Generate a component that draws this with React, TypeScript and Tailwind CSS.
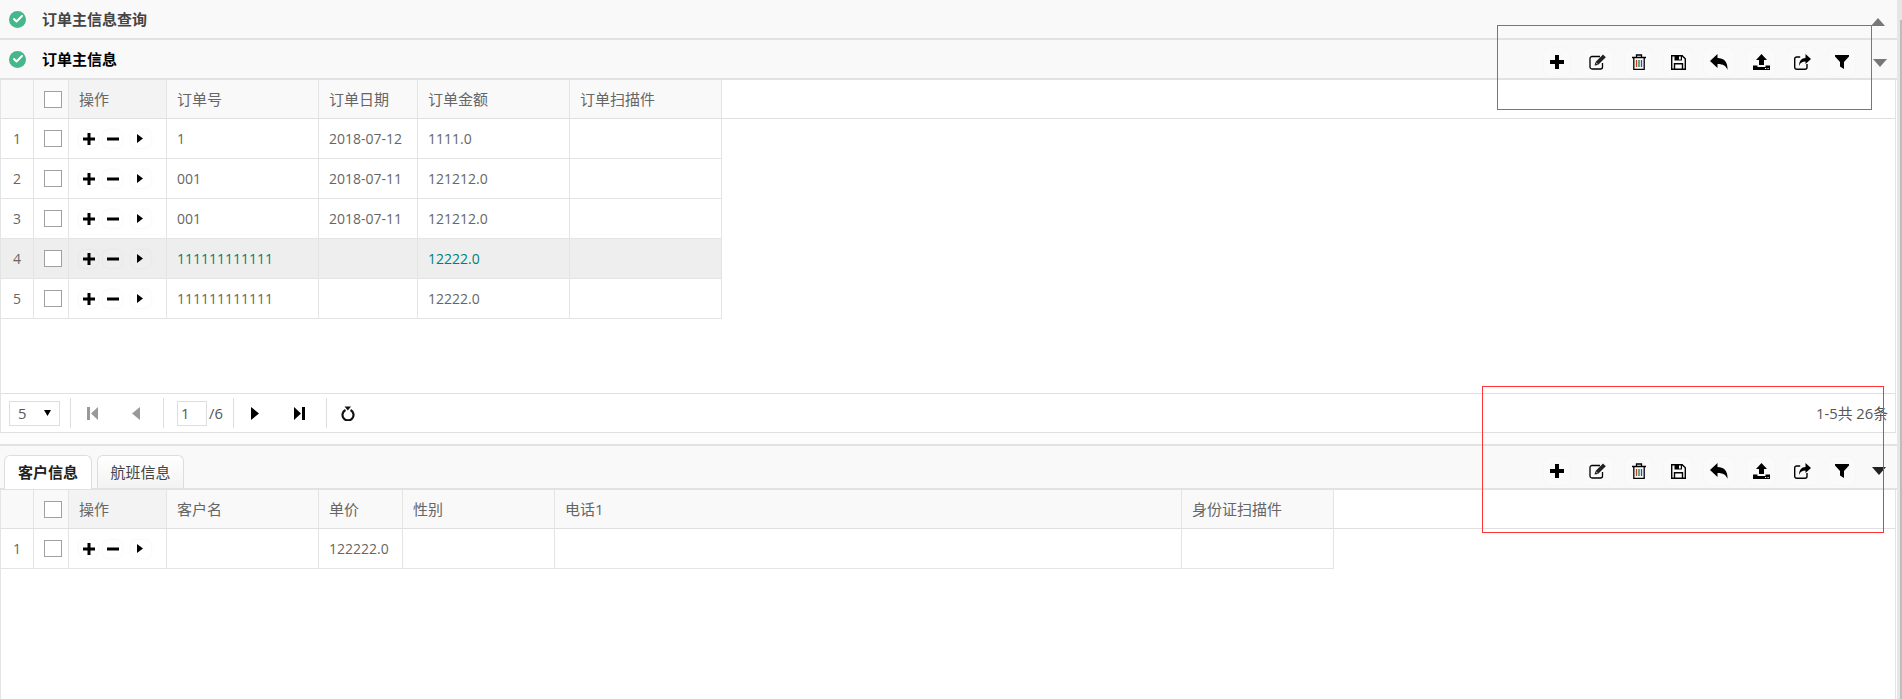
import { Check } from "lucide-react";

const font = "font-['Open_Sans','Noto_Sans_CJK_SC',sans-serif]";

const orderCols = [33, 35, 98, 152, 99, 152, 152];
const customerCols = [33, 35, 98, 152, 84, 152, 627, 152];

const orderRows = [
  ["1", "2018-07-12", "1111.0"],
  ["001", "2018-07-11", "121212.0"],
  ["001", "2018-07-11", "121212.0"],
  ["111111111111", "", "12222.0"],
  ["111111111111", "", "12222.0"],
];

const ToolButton = ({ width, className, children }: { width: number; className?: string; children: React.ReactNode }) => (
  <div
    className={`flex h-7 items-center justify-center rounded-md bg-[#fafafa] shadow-[0_0_2px_rgba(0,0,0,0.04)] ${className ?? ""}`}
    style={{ width }}
  >
    {children}
  </div>
);

const Toolbar = ({ dark }: { dark?: boolean }) => (
  <div className="flex items-center gap-3">
    <ToolButton width={26}>
      <svg width="14" height="14" viewBox="0 0 14 14"><path d="M5 0h4v5h5v4H9v5H5V9H0V5h5z" fill="#000" /></svg>
    </ToolButton>
    <ToolButton width={30} className="ml-px">
      <svg width="18" height="16" viewBox="0 0 18 16" fill="none">
        <path d="M13.500 9v4a2 2 0 0 1-2 2H3a2 2 0 0 1-2-2V4.500a2 2 0 0 1 2-2h8" stroke="#000" strokeWidth="1.300" />
        <path d="M5.500 11.500l1-3.500L14 .5l2.800 2.800L9 11z" fill="#222" />
        <path d="M6.800 8.500l2 2" stroke="#fff" strokeWidth="0.800" />
      </svg>
    </ToolButton>
    <ToolButton width={27}>
      <svg width="14" height="16" viewBox="0 0 14 16" fill="none">
        <path d="M0 3.500h14M4.500 3V1h5v2M1.800 3.500v11.800h10.400V3.500" stroke="#000" strokeWidth="1.300" />
        <path d="M4.500 6v7" stroke="#c2410c" strokeWidth="1.300" />
        <path d="M7 6v7" stroke="#15803d" strokeWidth="1.300" />
        <path d="M9.500 6v7" stroke="#1d4ed8" strokeWidth="1.300" />
      </svg>
    </ToolButton>
    <ToolButton width={28}>
      <svg width="15" height="15" viewBox="0 0 15 15" fill="none">
        <path d="M.7.7h10.500l3.100 3.100v10.500H.7z" stroke="#000" strokeWidth="1.400" />
        <path d="M3.500 1h7.500v4.500H3.500z" fill="#000" />
        <path d="M8 1.500h1.800v3H8z" fill="#fff" />
        <path d="M3.500 14.500V8.700h8v5.800" stroke="#000" strokeWidth="1.400" />
      </svg>
    </ToolButton>
    <ToolButton width={30}>
      <svg width="18" height="16" viewBox="0 0 18 16"><path d="M7.500 0v4C13.500 4 18 7.500 17.500 16c-1.500-4-4-6-10-6v4L0 7z" fill="#000" /></svg>
    </ToolButton>
    <ToolButton width={28} className="ml-px">
      <svg width="17" height="16" viewBox="0 0 17 16">
        <path d="M8.500 0L14 6h-3v5H6V6H3z" fill="#000" />
        <path d="M0 11.500h4.500v1.500h8v-1.500H17V16H0z" fill="#000" />
        <path d="M12 14h1.200v1H12zM14.500 14h1.200v1h-1.200z" fill="#fff" />
      </svg>
    </ToolButton>
    <ToolButton width={29} className="ml-px">
      <svg width="17" height="16" viewBox="0 0 17 16" fill="none">
        <path d="M13 10v3.300a2 2 0 0 1-2 2H2.700a2 2 0 0 1-2-2V5a2 2 0 0 1 2-2h3.500" stroke="#000" strokeWidth="1.400" />
        <path d="M11.500 0L17 5l-5.500 5V7.500C8.500 7.500 6.300 8.500 5 12c0-5 2.500-8 6.500-8z" fill="#000" />
      </svg>
    </ToolButton>
    <ToolButton width={26}>
      <svg width="14" height="14" viewBox="0 0 14 14"><path d="M0 0h14v1.500L9 7v7L5 11.500V7L0 1.500z" fill="#000" /></svg>
    </ToolButton>
    <div
      className={`h-0 w-0 border-x-[7px] border-t-[8px] border-x-transparent ${dark ? "ml-[5px] border-t-[#222]" : "ml-[6px] translate-y-px border-t-[#777]"}`}
    />
  </div>
);

const actionBox = "flex h-[18px] items-center justify-center rounded-md shadow-[0_0_3px_rgba(0,0,0,0.06)]";

const RowActions = () => (
  <div className="flex items-center gap-[5px]">
    <div className={`w-[19px] ${actionBox}`}>
      <svg width="12" height="12" viewBox="0 0 12 12"><path d="M4.500 0h3v4.500H12v3H7.500V12h-3V7.500H0v-3h4.500z" fill="#000" /></svg>
    </div>
    <div className={`w-[19px] ${actionBox}`}>
      <svg width="12" height="12" viewBox="0 0 12 12"><path d="M0 4.500h12v3H0z" fill="#000" /></svg>
    </div>
    <div className={`ml-1 w-5 pr-[3px] ${actionBox}`}>
      <svg width="6" height="9" viewBox="0 0 6 9"><path d="M0 0l6 4.500L0 9z" fill="#000" /></svg>
    </div>
  </div>
);

const CheckBox = () => <div className="ml-[3px] h-[17px] w-[18px] border border-[#a0a0a0] bg-white" />;

const Cell = ({ width, className, children }: { width: number; className?: string; children?: React.ReactNode }) => (
  <div
    className={`flex shrink-0 items-center border-r border-[#e4e4e4] ${className ?? ""}`}
    style={{ width }}
  >
    {children}
  </div>
);

const Grid = ({
  cols,
  headers,
  rows,
  activeRow,
}: {
  cols: number[];
  headers: string[];
  rows: string[][];
  activeRow?: number;
}) => (
  <div>
    <div className="flex h-[39px] border-b border-[#e0e0e0] text-[15px]">
      <Cell width={cols[0]} className="bg-[#f9f9f9]" />
      <Cell width={cols[1]} className="justify-center bg-[#f9f9f9]">
        <CheckBox />
      </Cell>
      <Cell width={cols[2]} className="bg-[#f3f3f3] pl-[10px] text-[#666]">操作</Cell>
      {headers.map((h, i) => (
        <Cell key={h} width={cols[i + 3]} className="bg-[#f9f9f9] pl-[10px] text-[#666]">
          {h}
        </Cell>
      ))}
    </div>
    {rows.map((row, r) => (
      <div key={r} className={`flex h-10 w-fit border-b border-[#e4e4e4] ${r === activeRow ? "bg-[#eee] text-[#00807a]" : "text-[#666]"}`}>
        <Cell width={cols[0]} className="justify-center text-[#666]">{r + 1}</Cell>
        <Cell width={cols[1]} className="justify-center">
          <CheckBox />
        </Cell>
        <Cell width={cols[2]} className="pl-[10px]">
          <RowActions />
        </Cell>
        {headers.map((h, i) => (
          <Cell key={h} width={cols[i + 3]} className="pl-[10px]">
            {row[i]}
          </Cell>
        ))}
      </div>
    ))}
  </div>
);

const PagerDivider = () => <div className="h-[30px] w-px bg-[#ddd]" />;

const Pager = () => (
  <div className="flex h-10 items-center justify-between border-y border-[#e0e0e0] pl-2 pr-[7px] text-[14.800px] text-[#555]">
    <div className="flex items-center">
      <div className="flex h-[25px] w-[51px] items-center justify-between border border-[#ddd] pl-2 pr-2">
        <span>5</span>
        <svg width="7" height="6" viewBox="0 0 7 6"><path d="M0 0h7L3.500 6z" fill="#000" /></svg>
      </div>
      <div className="ml-[10px]"><PagerDivider /></div>
      <div className="ml-4 flex items-center gap-[34px]">
        <svg width="11" height="13" viewBox="0 0 11 13"><path d="M0 0h3v13H0zM11 0v13L4 6.500z" fill="#999" /></svg>
        <svg width="8" height="13" viewBox="0 0 8 13"><path d="M8 0v13L0 6.500z" fill="#999" /></svg>
      </div>
      <div className="ml-[23px]"><PagerDivider /></div>
      <div className="ml-[13px] flex h-[25px] w-[30px] items-center border border-[#ddd] pl-[3px]">1</div>
      <span className="ml-[2px] w-6">/6</span>
      <PagerDivider />
      <div className="ml-[17px] flex items-center gap-[35px]">
        <svg width="8" height="13" viewBox="0 0 8 13"><path d="M0 0v13l8-6.500z" fill="#000" /></svg>
        <svg width="11" height="13" viewBox="0 0 11 13"><path d="M0 0v13l7-6.500zM8 0h3v13H8z" fill="#000" /></svg>
      </div>
      <div className="ml-[21px]"><PagerDivider /></div>
      <svg className="ml-[14px]" width="14" height="15" viewBox="0 0 14 15" fill="none">
        <path d="M4.500 4a5.500 5.500 0 1 0 5 0" stroke="#111" strokeWidth="2.200" />
        <path d="M3.500 0.500h6.500l-3.200 4z" fill="#111" />
      </svg>
    </div>
    <span>1-5共 26条</span>
  </div>
);

const SectionTitle = ({ title, className }: { title: string; className?: string }) => (
  <div className="flex items-center gap-4 pl-[9px]">
    <div className="flex h-[17px] w-[17px] items-center justify-center rounded-full bg-[#44b78b]">
      <Check size={12} strokeWidth={4} color="#fff" />
    </div>
    <span className={`text-[15px] font-bold ${className ?? ""}`}>{title}</span>
  </div>
);

const App = () => {
  return (
    <div className={`relative flex h-[699px] w-[1902px] overflow-hidden bg-white text-[14px] ${font}`}>
      <div className="w-[1897px]">
        {/* query panel */}
        <div className="flex h-[40px] items-center justify-between border-b-2 border-[#e2e2e2] bg-[#f9f9f9] pr-3">
          <SectionTitle title="订单主信息查询" className="text-[#444]" />
          <div className="h-0 w-0 translate-y-[3px] border-x-[7px] border-b-[8px] border-x-transparent border-b-[#777]" />
        </div>

        {/* main panel */}
        <div className="flex h-[40px] items-center justify-between border-b-2 border-[#e2e2e2] bg-[#f9f9f9] pr-[10px]">
          <SectionTitle title="订单主信息" className="text-black" />
          <div className="mt-[6px]">
            <Toolbar />
          </div>
        </div>
        <div className="mr-px h-[313px] border-x border-[#e4e4e4]">
          <Grid
            cols={orderCols}
            headers={["订单号", "订单日期", "订单金额", "订单扫描件"]}
            rows={orderRows.map((r) => [r[0], r[1], r[2], ""])}
            activeRow={3}
          />
        </div>
        <div className="mr-px border-x border-[#e4e4e4]">
          <Pager />
        </div>

        <div className="h-[11px] bg-[#fcfcfc]" />

        {/* detail panel */}
        <div className="flex h-[46px] items-end justify-between border-y-2 border-[#e2e2e2] bg-[#f9f9f9] pr-[11px]">
          <div className="flex items-start gap-[5px] pl-[4px] text-[15px]">
            <div className="-mb-px flex h-[34px] w-[88px] items-center justify-center rounded-t-md border border-b-0 border-[#ddd] bg-white font-bold text-[#222]">
              客户信息
            </div>
            <div className="flex h-[33px] w-[87px] items-center justify-center rounded-t-md border border-b-0 border-[#ddd] bg-gradient-to-b from-white to-[#f3f3f3] text-[#444]">
              航班信息
            </div>
          </div>
          <div className="mb-[3px]">
            <Toolbar dark />
          </div>
        </div>
        <div className="mr-px h-[209px] border-x border-[#e4e4e4]">
          <Grid
            cols={customerCols}
            headers={["客户名", "单价", "性别", "电话1", "身份证扫描件"]}
            rows={[["", "122222.0", "", "", ""]]}
          />
        </div>
      </div>

      {/* page scrollbar */}
      <div className="h-full w-[5px] bg-[#e6e6e6]">
        <div className="ml-[3px] mt-5 h-full w-[2px] bg-[#bdbdbd]" />
      </div>

      {/* annotation boxes */}
      <div className="absolute left-[1497px] top-[25px] h-[85px] w-[375px] border border-[#ee4444]" />
      <div className="absolute left-[1482px] top-[386px] h-[147px] w-[402px] border border-[#ff3333]" />
    </div>
  );
};

export default App;
